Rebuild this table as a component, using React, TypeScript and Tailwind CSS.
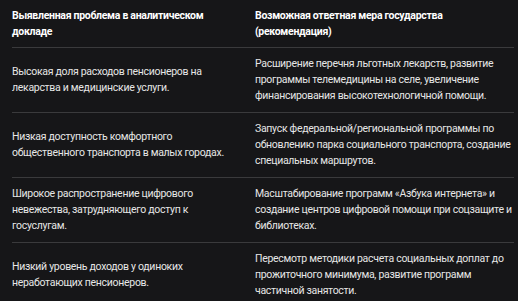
import React from "react";

const rows: [string, string][] = [
  [
    "Высокая доля расходов пенсионеров на лекарства и медицинские услуги.",
    "Расширение перечня льготных лекарств, развитие программы телемедицины на селе, увеличение финансирования высокотехнологичной помощи.",
  ],
  [
    "Низкая доступность комфортного общественного транспорта в малых городах.",
    "Запуск федеральной/региональной программы по обновлению парка социального транспорта, создание специальных маршрутов.",
  ],
  [
    "Широкое распространение цифрового невежества, затрудняющего доступ к госуслугам.",
    "Масштабирование программ «Азбука интернета» и создание центров цифровой помощи при соцзащите и библиотеках.",
  ],
  [
    "Низкий уровень доходов у одиноких неработающих пенсионеров.",
    "Пересмотр методики расчета социальных доплат до прожиточного минимума, развитие программ частичной занятости.",
  ],
];

export default function App() {
  return (
    <div className="h-[301px] w-[518px] overflow-hidden bg-[#161618] font-['Roboto',sans-serif] text-[10.5px] leading-4 tracking-[-0.3px] text-[#e6e6e6]">
      <table className="ml-3 w-[502px] table-fixed border-collapse">
        <colgroup>
          <col className="w-[231px]" />
          <col />
        </colgroup>
        <thead>
          <tr className="border-b border-[#3a3a3c]">
            <th className="pt-2 pb-[7px] pr-3 text-left align-middle font-bold text-white">
              Выявленная проблема в аналитическом докладе
            </th>
            <th className="pt-2 pb-[7px] pl-3 text-left align-middle font-bold text-white">
              Возможная ответная мера государства (рекомендация)
            </th>
          </tr>
        </thead>
        <tbody>
          {rows.map(([problem, measure], i) => (
            <tr key={i} className={i < rows.length - 1 ? "border-b border-[#3a3a3c]" : ""}>
              <td className="py-2 pr-3 align-middle">{problem}</td>
              <td className="py-2 pl-3 align-middle">{measure}</td>
            </tr>
          ))}
        </tbody>
      </table>
    </div>
  );
}
